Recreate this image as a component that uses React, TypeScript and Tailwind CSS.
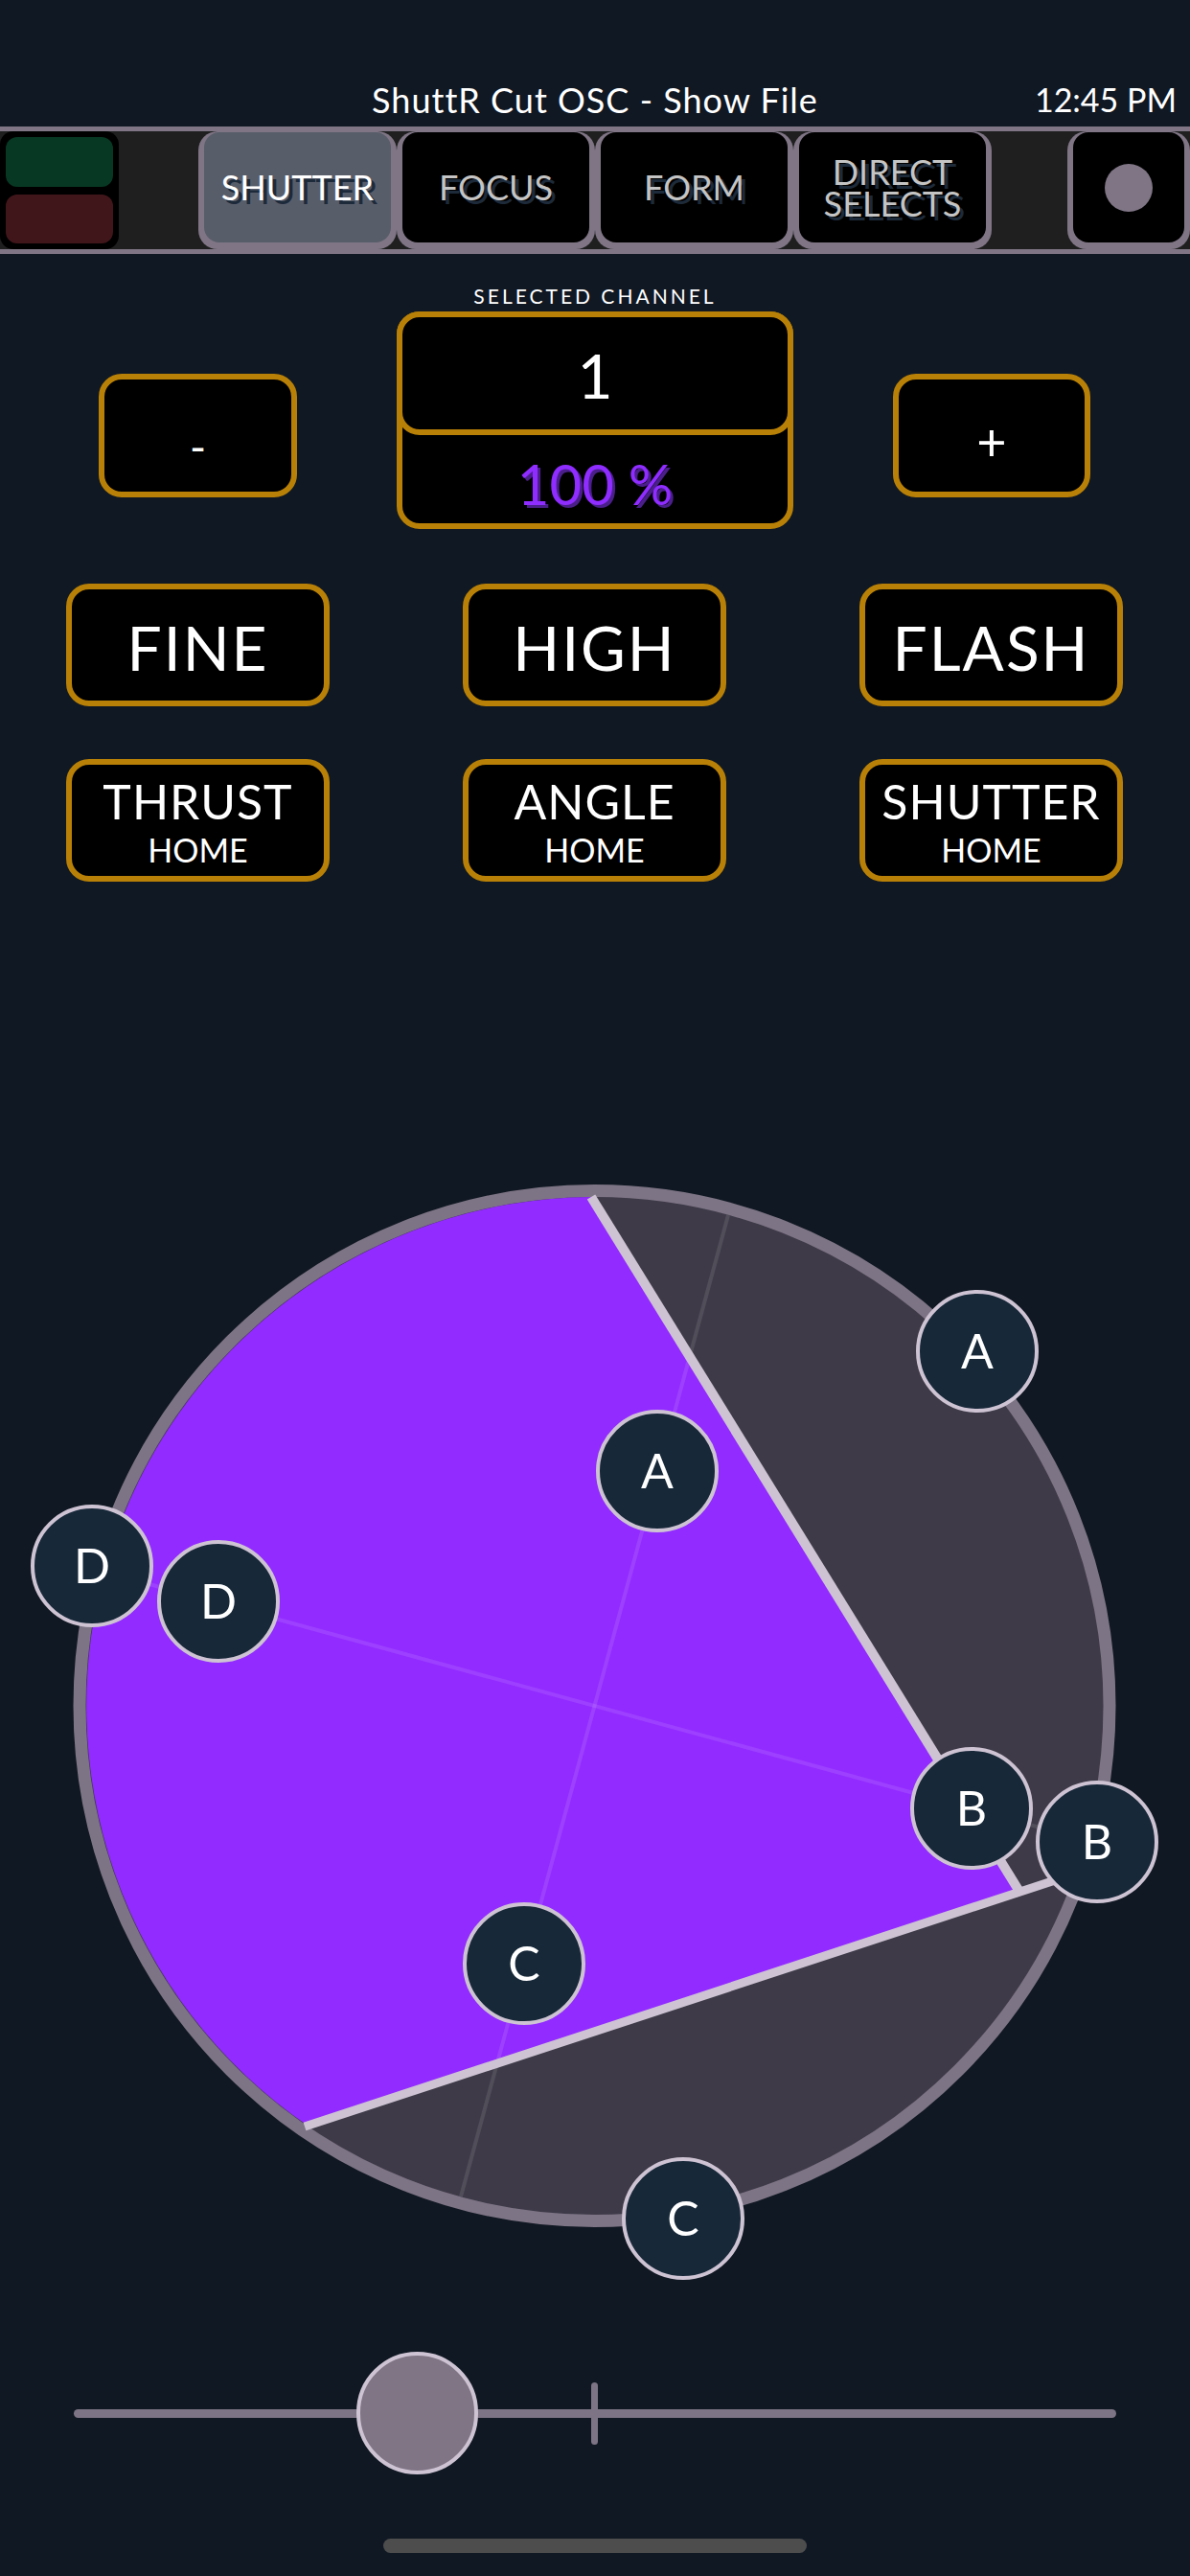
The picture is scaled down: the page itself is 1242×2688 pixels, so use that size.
import React from 'react';

const GOLD = 'border-[#b88006]';

const tabs = [
    { label: 'SHUTTER', active: true },
    { label: 'FOCUS' },
    { label: 'FORM' },
    { label: 'DIRECT\nSELECTS' },
];

const markers = [
    { l: 'A', x: 1020, y: 1410 },
    { l: 'A', x: 686, y: 1535 },
    { l: 'D', x: 96, y: 1634 },
    { l: 'D', x: 228, y: 1671 },
    { l: 'B', x: 1014, y: 1887 },
    { l: 'B', x: 1145, y: 1922 },
    { l: 'C', x: 547, y: 2049 },
    { l: 'C', x: 713, y: 2315 },
];

function Toolbar() {
    return (
        <div className="h-[133px] bg-[#1f1f1f] border-y-[5px] border-[#7f7585] flex">
            <div className="w-[124px] h-full bg-black rounded-[14px] p-[6px] flex flex-col gap-[8px]">
                <div className="flex-1 rounded-[12px] bg-[#073823]" />
                <div className="flex-1 rounded-[12px] bg-[#41161a]" />
            </div>
            <div className="w-[83px]" />
            {tabs.map((t) => (
                <div key={t.label} className="w-[207px] h-full bg-[#7f7585] rounded-[20px] pt-[1px] px-[6px] pb-[7px]">
                    <div
                        className={`h-full rounded-[16px] flex items-center justify-center text-center whitespace-pre text-[36px] leading-[33px] [text-shadow:4px_4px_0_#1d2a3a] ${
                            t.active ? 'bg-[#585d6a] text-white' : 'bg-black text-[#c4c4c4]'
                        }`}
                    >
                        {t.label}
                    </div>
                </div>
            ))}
            <div className="w-[79px]" />
            <div className="w-[128px] h-full bg-[#7f7585] rounded-[20px] pt-[1px] px-[6px] pb-[7px]">
                <div className="h-full rounded-[16px] bg-black flex items-center justify-center">
                    <div className="w-[50px] h-[50px] rounded-full bg-[#7f7585]" />
                </div>
            </div>
        </div>
    );
}

function GoldButton({ top, sub }: { top: string; sub?: string }) {
    return (
        <div className={`w-[275px] h-[128px] border-[6px] ${GOLD} rounded-[24px] bg-black flex flex-col items-center justify-center text-white`}>
            {sub ? (
                <>
                    <div className="text-[50px] leading-[60px] tracking-[1px]">{top}</div>
                    <div className="text-[34px] leading-[41px]">{sub}</div>
                </>
            ) : (
                <div className="text-[64px] leading-[64px] tracking-[2px] pt-[6px]">{top}</div>
            )}
        </div>
    );
}

function Shutter() {
    const cx = 620.5;
    const cy = 1780;
    return (
        <svg width="1242" height="1180" viewBox="0 1220 1242 1180" className="block">
            <circle cx={cx} cy={cy} r={537.5} fill="#3e3a48" stroke="#7d7485" strokeWidth={13} />
            <path d="M 617 1249 A 531 531 0 0 0 321 2218 L 1064 1974 Z" fill="#922bff" />
            <line x1={760} y1={1268} x2={481} y2={2292} stroke="#ffffff" strokeOpacity={0.1} strokeWidth={4} />
            <line x1={108} y1={1640} x2={1133} y2={1920} stroke="#ffffff" strokeOpacity={0.1} strokeWidth={4} />
            <line x1={617} y1={1249} x2={1066} y2={1977} stroke="#cdc3d3" strokeWidth={10} />
            <line x1={318} y1={2219} x2={1150} y2={1946} stroke="#cdc3d3" strokeWidth={9} />
            {markers.map((m, i) => (
                <g key={i}>
                    <circle cx={m.x} cy={m.y} r={62} fill="#172839" stroke="#cdc3d3" strokeWidth={4} />
                    <text
                        x={m.x}
                        y={m.y + 18}
                        textAnchor="middle"
                        fill="#ffffff"
                        fontSize={50}
                        fontFamily="Lato, 'Liberation Sans', sans-serif"
                    >
                        {m.l}
                    </text>
                </g>
            ))}
        </svg>
    );
}

export default function App() {
    return (
        <div className="w-[1242px] min-h-[2688px] bg-[#101823] text-white font-['Lato','Liberation_Sans',sans-serif] overflow-hidden">
            {/* title bar */}
            <div className="h-[132px] pt-[86px] grid grid-cols-[1fr_auto_1fr] items-start">
                <div />
                <div className="text-[36px] leading-none tracking-[1px]">ShuttR Cut OSC - Show File</div>
                <div className="text-[34px] leading-none text-right pr-[14px] pt-[1px]">12:45 PM</div>
            </div>

            <Toolbar />

            {/* selected channel */}
            <div className="pt-[33px] text-center text-[21px] leading-none tracking-[3px]">SELECTED CHANNEL</div>
            <div className="mt-[6px] pl-[103px] flex items-start gap-[104px]">
                <div className={`mt-[65px] w-[207px] h-[129px] border-[6px] ${GOLD} rounded-[24px] bg-black flex items-center justify-center text-[46px] leading-none pt-[22px]`}>
                    -
                </div>
                <div className={`w-[414px] h-[227px] border-[6px] ${GOLD} rounded-[24px] bg-black flex flex-col`}>
                    <div className={`-mx-[6px] -mt-[6px] h-[129px] border-[6px] ${GOLD} rounded-[24px] bg-black flex items-center justify-center pt-[5px] text-[64px] leading-none`}>
                        1
                    </div>
                    <div className="flex-1 flex items-center justify-center pt-[10px] text-[58px] leading-none text-[#8f2cff] [text-shadow:3px_3px_0_#4a1f8a]">
                        100 %
                    </div>
                </div>
                <div className={`mt-[65px] w-[206px] h-[129px] border-[6px] ${GOLD} rounded-[24px] bg-black flex items-center justify-center text-[54px] leading-none pt-[12px]`}>
                    +
                </div>
            </div>

            {/* mode buttons */}
            <div className="mt-[57px] pl-[69px] flex gap-[139px]">
                <GoldButton top="FINE" />
                <GoldButton top="HIGH" />
                <GoldButton top="FLASH" />
            </div>
            <div className="mt-[55px] pl-[69px] flex gap-[139px]">
                <GoldButton top="THRUST" sub="HOME" />
                <GoldButton top="ANGLE" sub="HOME" />
                <GoldButton top="SHUTTER" sub="HOME" />
            </div>

            <div className="mt-[300px]">
                <Shutter />
            </div>

            {/* rotation slider */}
            <div className="relative mt-[54px] h-[128px] px-[77px] flex items-center">
                <div className="flex-1 h-[9px] rounded-full bg-[#7d7485]" />
                <div className="absolute left-[617px] top-[32px] w-[7px] h-[65px] rounded-full bg-[#7d7485]" />
                <div className="absolute left-[372px] top-0 w-[127px] h-[128px] rounded-full bg-[#7f7585] border-[4px] border-[#cdc3d3]" />
            </div>

            <div className="mt-[67px] ml-[400px] w-[442px] h-[15px] rounded-full bg-[#4d4d4d]" />
        </div>
    );
}
